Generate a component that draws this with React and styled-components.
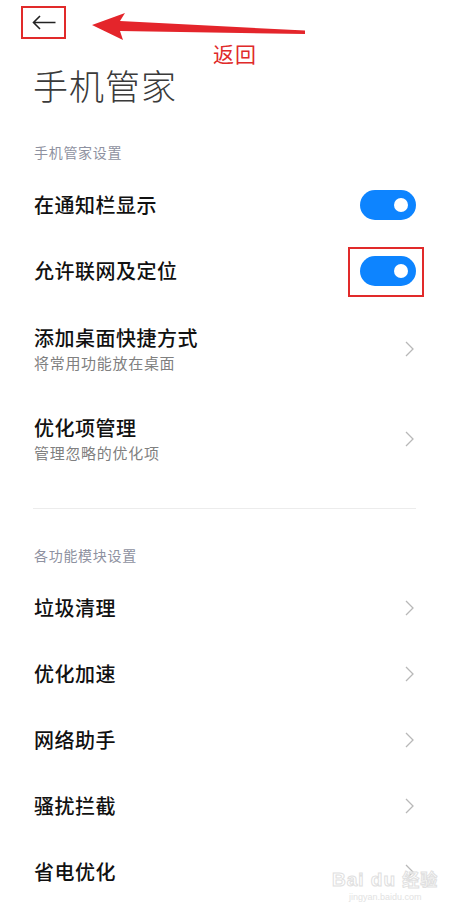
import styled, { createGlobalStyle } from "styled-components";

const GlobalStyle = createGlobalStyle`
  html, body {
    margin: 0;
    padding: 0;
    background: #fff;
  }
  body {
    font-family: "Noto Sans CJK SC", "Noto Sans", sans-serif;
    -webkit-font-smoothing: antialiased;
  }
`;

const Page = styled.div`
  position: relative;
  width: 450px;
  height: 920px;
  overflow: hidden;
  background: #fff;
`;

const TopBar = styled.div`
  height: 46px;
  display: flex;
  align-items: center;
  padding-left: 21px;
`;

const BackButton = styled.div`
  width: 45px;
  height: 33px;
  margin-top: -1px;
  box-sizing: border-box;
  border: 2px solid #e12a2a;
  display: flex;
  align-items: center;
  justify-content: center;
  color: #222;
`;

const PageTitle = styled.h1`
  margin: 0;
  padding: 15px 0 0 33px;
  height: 86px;
  box-sizing: border-box;
  font-size: 35px;
  line-height: 48px;
  font-weight: 300;
  letter-spacing: 1px;
  color: #3a3a3a;
`;

const SectionHeader = styled.div`
  padding: 10px 34px;
  font-size: 14px;
  line-height: 20px;
  letter-spacing: 0.7px;
  color: #8e91a0;
`;

const Row = styled.div`
  position: relative;
  height: ${(p) => (p.tall ? 90 : 66)}px;
  padding: 0 34px;
  display: flex;
  align-items: center;
  justify-content: space-between;
`;

const RowText = styled.div`
  display: flex;
  flex-direction: column;
  gap: 3px;
`;

const RowTitle = styled.div`
  font-size: 20px;
  line-height: 24px;
  font-weight: 500;
  letter-spacing: 0.5px;
  color: #111;
`;

const RowSubtitle = styled.div`
  font-size: 15px;
  line-height: 20px;
  letter-spacing: 0.7px;
  color: #808080;
`;

const Toggle = styled.div`
  position: relative;
  width: 56px;
  height: 30px;
  border-radius: 15px;
  background: #0d84ff;

  &::before {
    content: "";
    position: absolute;
    right: 8px;
    top: 8px;
    width: 14px;
    height: 14px;
    border-radius: 50%;
    background: #fff;
  }

  ${(p) =>
    p.marked &&
    `
    &::after {
      content: "";
      position: absolute;
      left: -12px;
      right: -8px;
      top: -9px;
      bottom: -11px;
      border: 2px solid #e12a2a;
    }
  `}
`;

const Chevron = styled.svg`
  width: 9px;
  height: 16px;
  margin-right: 2px;
`;

const Divider = styled.div`
  height: 1px;
  margin: 24px 34px 26px 33px;
  background: #ececec;
`;

const Annotation = styled.svg`
  position: absolute;
  left: 0;
  top: 0;
  pointer-events: none;
`;

const AnnotationLabel = styled.div`
  position: absolute;
  left: 213px;
  top: 40px;
  font-size: 21px;
  line-height: 26px;
  color: #e02a2a;
  letter-spacing: 1px;
`;

const Watermark = styled.div`
  position: absolute;
  left: 332px;
  top: 868px;
  display: flex;
  flex-direction: column;
  align-items: center;
  font-family: "Liberation Sans", sans-serif;
`;

const WatermarkMain = styled.div`
  font-size: 19px;
  font-weight: 700;
  line-height: 22px;
  letter-spacing: 1px;
  color: rgba(255, 255, 255, 0.6);
  -webkit-text-stroke: 1px #e0e0e0;

  span {
    font-family: "Noto Sans CJK SC", sans-serif;
    font-size: 17px;
  }
`;

const WatermarkUrl = styled.div`
  font-size: 9px;
  line-height: 12px;
  color: #e2e2e2;
`;

function ChevronIcon() {
  return (
    <Chevron viewBox="0 0 9 16">
      <path d="M1 1 L8 8 L1 15" fill="none" stroke="#b8b8b8" strokeWidth="1.3" />
    </Chevron>
  );
}

function SwitchRow({ title, marked }) {
  return (
    <Row>
      <RowTitle>{title}</RowTitle>
      <Toggle marked={marked} />
    </Row>
  );
}

function LinkRow({ title, subtitle }) {
  return (
    <Row tall={!!subtitle}>
      <RowText>
        <RowTitle>{title}</RowTitle>
        {subtitle ? <RowSubtitle>{subtitle}</RowSubtitle> : null}
      </RowText>
      <ChevronIcon />
    </Row>
  );
}

const modules = ["垃圾清理", "优化加速", "网络助手", "骚扰拦截", "省电优化"];

export default function App() {
  return (
    <Page>
      <GlobalStyle />
      <TopBar>
        <BackButton>
          <svg width="24" height="15" viewBox="0 0 24 15">
            <path
              d="M23.5 7.5 H1.5 M8 1 L1.5 7.5 L8 14"
              fill="none"
              stroke="#222"
              strokeWidth="1.6"
            />
          </svg>
        </BackButton>
      </TopBar>

      <PageTitle>手机管家</PageTitle>

      <SectionHeader>手机管家设置</SectionHeader>
      <SwitchRow title="在通知栏显示" />
      <SwitchRow title="允许联网及定位" marked />
      <LinkRow title="添加桌面快捷方式" subtitle="将常用功能放在桌面" />
      <LinkRow title="优化项管理" subtitle="管理忽略的优化项" />

      <Divider />

      <SectionHeader>各功能模块设置</SectionHeader>
      {modules.map((m) => (
        <LinkRow key={m} title={m} />
      ))}

      <Annotation width="320" height="50" viewBox="0 0 320 50">
        <path
          d="M92 25 L125 13 L120 21 L305 30.5 L305 34 L120 31 L123 40 Z"
          fill="#e4252b"
        />
      </Annotation>
      <AnnotationLabel>返回</AnnotationLabel>

      <Watermark>
        <WatermarkMain>
          Bai du <span>经验</span>
        </WatermarkMain>
        <WatermarkUrl>jingyan.baidu.com</WatermarkUrl>
      </Watermark>
    </Page>
  );
}
